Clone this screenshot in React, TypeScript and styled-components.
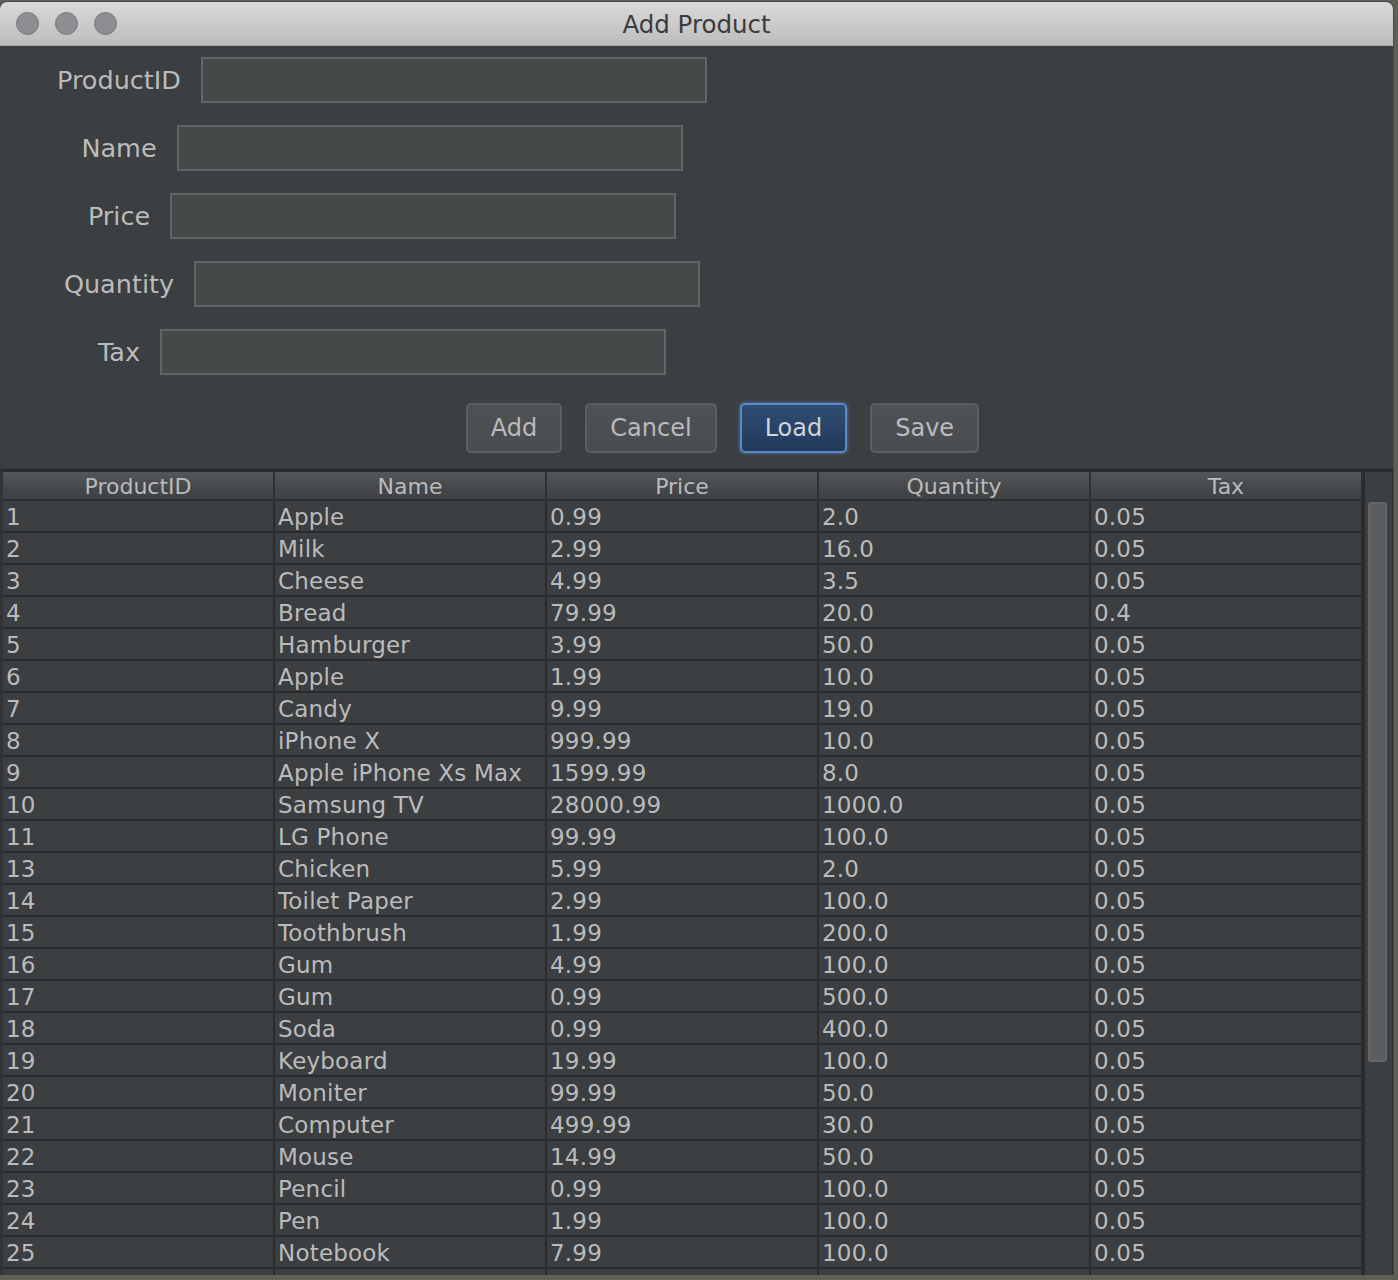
import React from "react";
import styled, { createGlobalStyle } from "styled-components";

const GlobalStyle = createGlobalStyle`
  html, body { margin: 0; padding: 0; }
  body {
    background: #5f5e57;
    font-family: "DejaVu Sans", "Liberation Sans", sans-serif;
    overflow: hidden;
  }
`;

const Window = styled.div`
  width: 1393px;
  height: 1273px;
  margin-top: 2px;
  border-radius: 7px 7px 0 0;
  overflow: hidden;
  background: #3c3f41;
  display: flex;
  flex-direction: column;
  box-shadow: 0 0 0 1px #4a4a44;
`;

const TitleBar = styled.div`
  height: 43px;
  flex: none;
  background: linear-gradient(#d9d9d9, #bdbdbd);
  border-bottom: 1px solid #a3a3a3;
  display: flex;
  align-items: center;
  position: relative;
  padding-left: 16px;
  gap: 16px;
`;

const Light = styled.span`
  width: 23px;
  height: 23px;
  border-radius: 50%;
  background: #8f8d92;
  border: 1px solid #7a787d;
  box-sizing: border-box;
`;

const Title = styled.div`
  position: absolute;
  left: 0;
  right: 0;
  top: 0;
  bottom: 0;
  display: flex;
  align-items: center;
  justify-content: center;
  font-size: 24.5px;
  color: #3b3b3b;
  padding-top: 2px;
`;

const Form = styled.div`
  width: 764px;
  padding-top: 11px;
  display: flex;
  flex-direction: column;
  gap: 22px;
`;

const FieldRow = styled.div`
  display: flex;
  align-items: center;
  justify-content: center;
  gap: 20px;
  height: 46px;
`;

const Label = styled.label`
  font-size: 25.5px;
  color: #bbbbbb;
`;

const Field = styled.div`
  width: 506px;
  height: 46px;
  box-sizing: border-box;
  background: #45494a;
  border: 2px solid #646464;
`;

const ButtonRow = styled.div`
  display: flex;
  justify-content: center;
  gap: 23px;
  margin-top: 28px;
  padding-left: 52px;
`;

const Button = styled.button<{ $primary?: boolean }>`
  height: 50px;
  padding: 0 23px;
  font-family: "DejaVu Sans", sans-serif;
  font-size: 24px;
  color: ${(p) => (p.$primary ? "#d0d4d8" : "#bbbbbb")};
  border-radius: 5px;
  border: 2px solid ${(p) => (p.$primary ? "#5a8ac4" : "#5b5f61")};
  background: ${(p) =>
    p.$primary ? "linear-gradient(#2f4d73, #223a5b)" : "linear-gradient(#4e5254, #494d4f)"};
  box-shadow: ${(p) => (p.$primary ? "0 0 3px 1px rgba(80,130,200,0.6)" : "none")};
`;

const ScrollPane = styled.div`
  margin-top: 16px;
  flex: 1;
  min-height: 0;
  border-top: 3px solid #2b2b2b;
  border-left: 3px solid #323436;
  display: flex;
  overflow: hidden;
`;

const TableArea = styled.div`
  width: 1360px;
  flex: none;
  display: flex;
  flex-direction: column;
`;

const Grid = styled.div`
  display: grid;
  grid-template-columns: repeat(5, 272px);
`;

const HeaderCell = styled.div`
  height: 29px;
  box-sizing: border-box;
  background: linear-gradient(#53575a, #45484b 60%, #3f4244);
  border-bottom: 2px solid #2d2f31;
  border-right: 2px solid #2d2f31;
  font-size: 22px;
  color: #bbbbbb;
  display: flex;
  align-items: center;
  justify-content: center;
  line-height: 1;
  padding-top: 2px;
`;

const Cell = styled.div`
  height: 32px;
  box-sizing: border-box;
  border-right: 2px solid #2b2b2b;
  border-bottom: 2px solid #2b2b2b;
  padding-left: 3px;
  padding-top: 1px;
  font-size: 23px;
  letter-spacing: 0.2px;
  color: #bbbbbb;
  display: flex;
  align-items: center;
  white-space: nowrap;
  overflow: hidden;
`;

const ScrollTrack = styled.div`
  flex: 1;
  border-left: 2px solid #2b2b2b;
  border-right: 2px solid #2e3032;
  padding: 30px 5px 0 3px;
`;

const Thumb = styled.div`
  width: 19px;
  height: 560px;
  box-sizing: border-box;
  background: #5a5c5d;
  border: 2px solid #636566;
  border-radius: 3px;
`;

const rows: string[][] = [
  ["1", "Apple", "0.99", "2.0", "0.05"],
  ["2", "Milk", "2.99", "16.0", "0.05"],
  ["3", "Cheese", "4.99", "3.5", "0.05"],
  ["4", "Bread", "79.99", "20.0", "0.4"],
  ["5", "Hamburger", "3.99", "50.0", "0.05"],
  ["6", "Apple", "1.99", "10.0", "0.05"],
  ["7", "Candy", "9.99", "19.0", "0.05"],
  ["8", "iPhone X", "999.99", "10.0", "0.05"],
  ["9", "Apple iPhone Xs Max", "1599.99", "8.0", "0.05"],
  ["10", "Samsung TV", "28000.99", "1000.0", "0.05"],
  ["11", "LG Phone", "99.99", "100.0", "0.05"],
  ["13", "Chicken", "5.99", "2.0", "0.05"],
  ["14", "Toilet Paper", "2.99", "100.0", "0.05"],
  ["15", "Toothbrush", "1.99", "200.0", "0.05"],
  ["16", "Gum", "4.99", "100.0", "0.05"],
  ["17", "Gum", "0.99", "500.0", "0.05"],
  ["18", "Soda", "0.99", "400.0", "0.05"],
  ["19", "Keyboard", "19.99", "100.0", "0.05"],
  ["20", "Moniter", "99.99", "50.0", "0.05"],
  ["21", "Computer", "499.99", "30.0", "0.05"],
  ["22", "Mouse", "14.99", "50.0", "0.05"],
  ["23", "Pencil", "0.99", "100.0", "0.05"],
  ["24", "Pen", "1.99", "100.0", "0.05"],
  ["25", "Notebook", "7.99", "100.0", "0.05"],
  ["", "", "", "", ""],
];

const fields = ["ProductID", "Name", "Price", "Quantity", "Tax"];
const headers = ["ProductID", "Name", "Price", "Quantity", "Tax"];

export default function App() {
  return (
    <>
      <GlobalStyle />
      <Window>
        <TitleBar>
          <Light />
          <Light />
          <Light />
          <Title>Add Product</Title>
        </TitleBar>
        <Form>
          {fields.map((f) => (
            <FieldRow key={f}>
              <Label>{f}</Label>
              <Field />
            </FieldRow>
          ))}
        </Form>
        <ButtonRow>
          <Button>Add</Button>
          <Button>Cancel</Button>
          <Button $primary>Load</Button>
          <Button>Save</Button>
        </ButtonRow>
        <ScrollPane>
          <TableArea>
            <Grid>
              {headers.map((h) => (
                <HeaderCell key={h}>{h}</HeaderCell>
              ))}
            </Grid>
            <Grid>
              {rows.map((r, ri) =>
                r.map((c, i) => <Cell key={ri + "-" + i}>{c}</Cell>)
              )}
            </Grid>
          </TableArea>
          <ScrollTrack>
            <Thumb />
          </ScrollTrack>
        </ScrollPane>
      </Window>
    </>
  );
}
